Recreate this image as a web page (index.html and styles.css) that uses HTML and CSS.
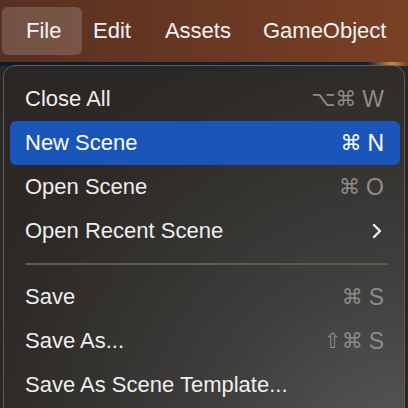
FILE: index.html
```html
<!DOCTYPE html>
<html lang="en">
<head>
  <meta charset="UTF-8">
  <meta name="viewport" content="width=device-width, initial-scale=1.0">
  <title>File menu</title>
  <link rel="stylesheet" href="styles.css">
</head>
<body>
  <div class="menubar">
    <div class="menubar-item active">File</div>
    <div class="menubar-item">Edit</div>
    <div class="menubar-item">Assets</div>
    <div class="menubar-item">GameObject</div>
  </div>
  <div class="strip"></div>
  <div class="menu">
    <div class="menu-item"><span>Close All</span><span class="key"><i>⌥⌘</i>W</span></div>
    <div class="menu-item selected"><span>New Scene</span><span class="key"><i>⌘</i>N</span></div>
    <div class="menu-item"><span>Open Scene</span><span class="key"><i>⌘</i>O</span></div>
    <div class="menu-item"><span>Open Recent Scene</span>
      <svg class="chevron" width="12" height="18" viewBox="0 0 12 18"><path d="M3 3 L9 9 L3 15" fill="none" stroke="#f0f0f0" stroke-width="2.4" stroke-linecap="round" stroke-linejoin="round"/></svg>
    </div>
    <div class="separator"></div>
    <div class="menu-item"><span>Save</span><span class="key"><i>⌘</i>S</span></div>
    <div class="menu-item"><span>Save As...</span><span class="key"><i>⇧⌘</i>S</span></div>
    <div class="menu-item"><span>Save As Scene Template...</span></div>
  </div>
</body>
</html>
```
FILE: styles.css
```css
body, html {
  height: 100%;
  margin: 0;
  overflow: hidden;
  font-family: "Liberation Sans", Arial, sans-serif;
  background: #2a2725;
}
.menubar {
  height: 62px;
  display: flex;
  align-items: center;
  padding-left: 2px;
  background: linear-gradient(90deg, #573020 0%, #683823 50%, #7a4024 100%);
}
.menubar-item {
  height: 48px;
  line-height: 48px;
  padding: 0 11px;
  color: #f2f2f2;
  font-size: 22px;
  border-radius: 6px;
}
.menubar-item.active {
  width: 56px;
  padding: 0 0 0 24px;
  background: rgba(255, 255, 255, 0.17);
}
.menubar-item:nth-child(3) { margin-left: 12px; }
.menubar-item:nth-child(4) { margin-left: 10px; }
.strip {
  height: 4px;
  background: linear-gradient(90deg, #0c1c2c 0%, #0d2236 90%, #c98a4a 96%, #7a4024 100%);
}
.menu {
  margin-left: 3px;
  width: 402px;
  height: 400px;
  margin-top: -1px;
  box-sizing: border-box;
  padding: 11px 4px 0 6px;
  border: 1px solid #5c5b59;
  border-radius: 12px;
  background: radial-gradient(ellipse at 100% 100%, #575a5a 0%, #3f3e3c 35%, #2c2926 75%, #292624 100%);
}
.menu-item {
  height: 44px;
  display: flex;
  align-items: center;
  justify-content: space-between;
  padding: 0 16px 0 15px;
  color: #eeeeee;
  font-size: 22px;
  border-radius: 6px;
}
.menu-item.selected {
  background: #1a55ba;
  color: #ffffff;
}
.key {
  color: #8d8c8a;
  font-size: 23px;
  display: flex;
  align-items: center;
}
.key i {
  font-style: normal;
  font-family: "DejaVu Sans", sans-serif;
  font-size: 21px;
  margin-right: 6px;
}
.selected .key {
  color: #ffffff;
}
.chevron {
  margin-right: 1px;
}
.separator {
  height: 2px;
  margin: 10px 13px 10px 15px;
  background: #5e5b57;
}
```
